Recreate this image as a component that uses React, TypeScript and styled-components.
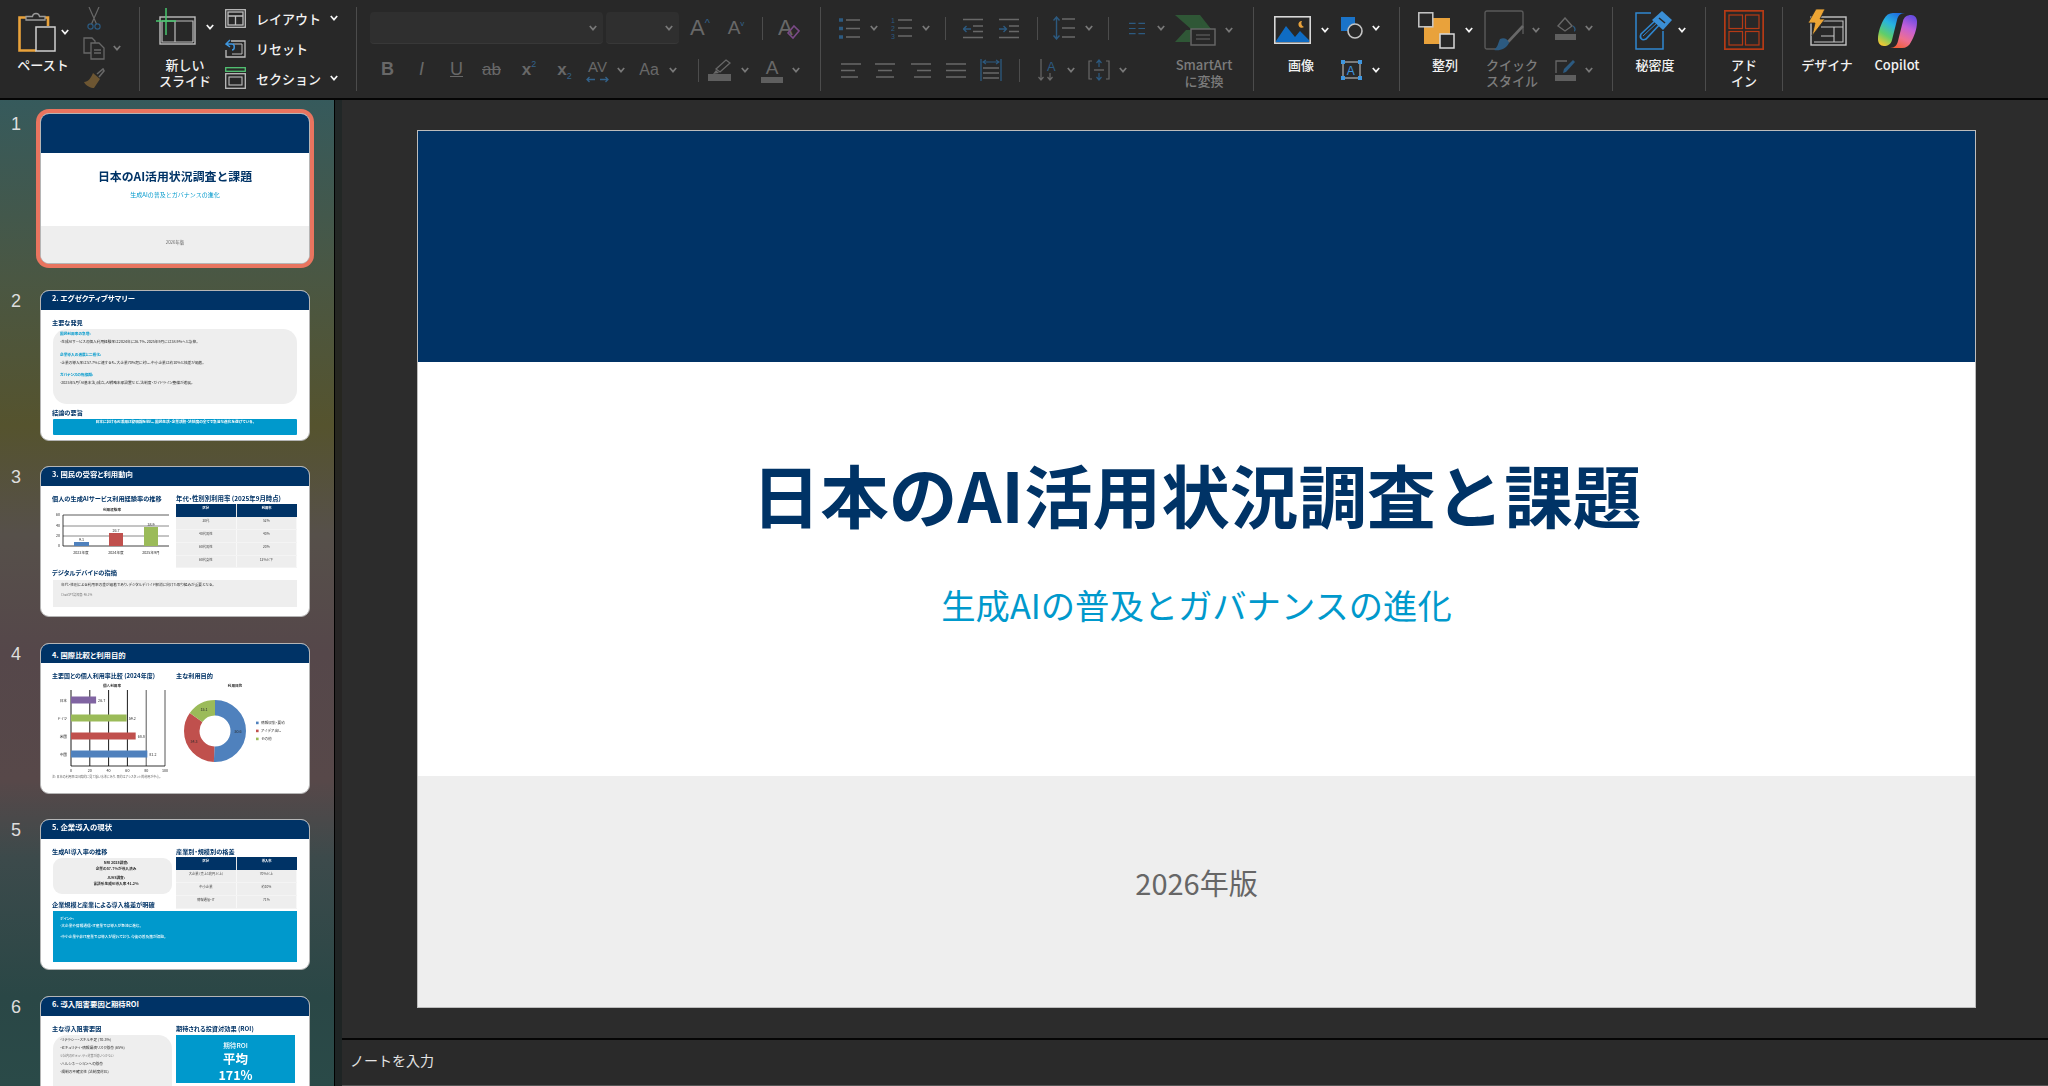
import React from 'react';
import styled, { createGlobalStyle } from 'styled-components';

const JP = `"Noto Sans CJK JP", "Noto Sans", sans-serif`;
const DIM = '#686868';
const DIMBLUE = '#2c5a80';
const NAVY = '#003366';
const CYAN = '#0099cc';

const GlobalStyle = createGlobalStyle`
  html, body {
    margin: 0;
    padding: 0;
    background: #2b2b2b;
    overflow: hidden;
  }
  * {
    box-sizing: border-box;
  }
`;

const Window = styled.div`
  width: 2048px;
  height: 1086px;
  display: flex;
  flex-direction: column;
  overflow: hidden;
  font-family: ${JP};
  color: #fff;
`;

/* ---------- ribbon ---------- */

const Ribbon = styled.header`
  height: 100px;
  flex: none;
  display: flex;
  align-items: stretch;
  background: #282828;
  border-bottom: 2px solid #050505;
`;

const Group = styled.section<{ $w?: number }>`
  display: flex;
  align-items: flex-start;
  flex: none;
  width: ${(p) => (p.$w ? `${p.$w}px` : 'auto')};
`;

const GroupRule = styled.i`
  flex: none;
  width: 1px;
  height: 84px;
  align-self: center;
  background: #4c4c4c;
`;

const BigTool = styled.div<{ $w: number; $ml?: number }>`
  flex: none;
  width: ${(p) => p.$w}px;
  margin-left: ${(p) => p.$ml ?? 0}px;
  display: flex;
  flex-direction: column;
  align-items: center;
`;

const BigIconRow = styled.div<{ $dy?: number }>`
  height: 44px;
  margin-top: ${(p) => 8 + (p.$dy ?? 0)}px;
  margin-bottom: ${(p) => -(p.$dy ?? 0)}px;
  display: flex;
  align-items: center;
`;

const BigLabel = styled.div<{ $off?: boolean; $dx?: number }>`
  margin-top: 5px;
  margin-right: ${(p) => p.$dx ?? 0}px;
  font-size: 13px;
  line-height: 16px;
  font-weight: 500;
  text-align: center;
  white-space: nowrap;
  color: ${(p) => (p.$off ? '#7c7c7c' : '#f2f2f2')};
`;

const ToolStack = styled.div<{ $w?: number; $ml?: number }>`
  flex: none;
  width: ${(p) => (p.$w ? `${p.$w}px` : 'auto')};
  margin-left: ${(p) => p.$ml ?? 0}px;
  margin-top: 11px;
  display: grid;
  grid-auto-rows: 34px;
  row-gap: 8px;
`;

const MiniStack = styled.div<{ $w: number; $ml: number }>`
  flex: none;
  width: ${(p) => p.$w}px;
  margin-left: ${(p) => p.$ml}px;
  margin-top: 3px;
  display: grid;
  grid-auto-rows: 30px;
`;

const ToolRow = styled.div`
  display: flex;
  align-items: center;
`;

const MiniLabel = styled.span`
  margin-left: 10px;
  font-size: 13px;
  font-weight: 500;
  color: #f2f2f2;
  white-space: nowrap;
`;

const Slot = styled.span<{ $w: number; $ml?: number }>`
  flex: none;
  width: ${(p) => p.$w}px;
  margin-left: ${(p) => p.$ml ?? 0}px;
  display: inline-flex;
  align-items: center;
  justify-content: center;
`;

const Combo = styled.div<{ $w: number; $ml: number }>`
  flex: none;
  width: ${(p) => p.$w}px;
  height: 32px;
  margin-left: ${(p) => p.$ml}px;
  padding-right: 6px;
  display: flex;
  align-items: center;
  justify-content: flex-end;
  background: #2f2f2f;
  border-bottom: 1px solid #383838;
  border-radius: 4px;
`;

const InnerRule = styled.i<{ $ml: number }>`
  flex: none;
  width: 1px;
  height: 23px;
  margin-left: ${(p) => p.$ml}px;
  background: #4c4c4c;
`;

const Glyph = styled.span<{ $size?: number; $bold?: boolean; $italic?: boolean; $under?: boolean; $strike?: boolean }>`
  font-family: "Liberation Sans", sans-serif;
  font-size: ${(p) => p.$size ?? 17}px;
  line-height: 1.2;
  color: ${DIM};
  font-weight: ${(p) => (p.$bold ? 700 : 400)};
  font-style: ${(p) => (p.$italic ? 'italic' : 'normal')};
  text-decoration: ${(p) => (p.$under ? 'underline' : p.$strike ? 'line-through' : 'none')};
  white-space: nowrap;
`;

const Script = styled.sub<{ $up?: boolean; $size?: number }>`
  font-size: ${(p) => p.$size ?? 9}px;
  font-weight: 400;
  color: #33628a;
  vertical-align: ${(p) => (p.$up ? '8px' : '-4px')};
  line-height: 0;
`;

const SwatchTool = styled.span`
  display: inline-flex;
  flex-direction: column;
  align-items: center;
  width: 22px;
`;

const SwatchBar = styled.i`
  display: block;
  width: 22px;
  height: 6px;
  margin-top: -2px;
  background: #5f5f5f;
`;

const ChevronSvg = styled.svg<{ $ml: number }>`
  flex: none;
  margin-left: ${(p) => p.$ml}px;
`;

const Chev = ({ ml = 10, off = false }: { ml?: number; off?: boolean }) => (
  <ChevronSvg $ml={ml} width="8" height="6" viewBox="0 0 8 6">
    <path d="M0.8 1 L4 4.6 L7.2 1" fill="none" stroke={off ? '#787878' : '#f4f4f4'} strokeWidth="1.7" />
  </ChevronSvg>
);

const PasteIcon = () => (
  <svg width="38" height="40" viewBox="0 0 38 40" fill="none">
    <path d="M8 5.5H1.5V38.5H18" stroke="#e9a23b" strokeWidth="2.6" />
    <path d="M27 5.5H30V14" stroke="#e9a23b" strokeWidth="2.6" />
    <path d="M8 8V4.5H14.5C15 0.5 21 0.5 21.5 4.5H27V8Z" stroke="#9a9a9a" strokeWidth="1.3" />
    <rect x="18" y="15" width="19" height="24" fill="#282828" stroke="#cfcfcf" strokeWidth="1.5" />
  </svg>
);

const ScissorsIcon = () => (
  <svg width="14" height="23" viewBox="0 0 14 23" fill="none" stroke={DIM} strokeWidth="1.2">
    <path d="M2 0L9.5 17M12 0L4.5 17" />
    <circle cx="3.5" cy="19.5" r="2.6" stroke={DIMBLUE} />
    <circle cx="10.5" cy="19.5" r="2.6" stroke={DIMBLUE} />
  </svg>
);

const CopyIcon = () => (
  <svg width="22" height="23" viewBox="0 0 22 23" fill="none" stroke={DIM} strokeWidth="1.3">
    <path d="M8 16H1V1H9L12 4V6" />
    <path d="M8 6H16L21 11V22H8Z" />
    <path d="M11 13H18M11 16H18" />
  </svg>
);

const BrushIcon = () => (
  <svg width="22" height="21" viewBox="0 0 22 21" fill="none">
    <path d="M14 6L20 1L21 3L16 9" stroke={DIM} strokeWidth="1.6" />
    <path d="M10 5L17 11L11 20C8 20 3 18 1 14C5 14 8 10 10 5Z" fill="#6d5632" />
  </svg>
);

const NewSlideIcon = () => (
  <svg width="40" height="38" viewBox="0 0 40 38" fill="none">
    <rect x="4" y="9" width="35" height="27" stroke="#bdbdbd" strokeWidth="1.4" />
    <path d="M6 13H37V34M6 13V34H37M19 13V34" stroke="#bdbdbd" strokeWidth="1.2" />
    <path d="M10 0V27M0 13H20" stroke="#47c66d" strokeWidth="1.5" />
  </svg>
);

const LayoutIcon = () => (
  <svg width="21" height="19" viewBox="0 0 21 19" fill="none" stroke="#bdbdbd" strokeWidth="1.3">
    <rect x="0.7" y="0.7" width="19.6" height="17.6" />
    <rect x="3" y="3" width="15" height="13" />
    <path d="M3 7H18M10.5 7V16" />
  </svg>
);

const ResetIcon = () => (
  <svg width="21" height="19" viewBox="0 0 21 19" fill="none">
    <path d="M6 2H20V18H1V11" stroke="#bdbdbd" strokeWidth="1.3" />
    <path d="M8 5H17V15H7" stroke="#bdbdbd" strokeWidth="1" />
    <path d="M5 1L1 5L5 8M1 5H7C10 5 10 11 7 11" stroke="#3f97e0" strokeWidth="1.5" />
  </svg>
);

const SectionIcon = () => (
  <svg width="21" height="22" viewBox="0 0 21 22" fill="none">
    <rect x="0.7" y="0.7" width="19.6" height="3.6" stroke="#53c574" strokeWidth="1.3" />
    <rect x="0.7" y="6.7" width="19.6" height="14.6" stroke="#bdbdbd" strokeWidth="1.3" />
    <rect x="4" y="10" width="13" height="8" stroke="#bdbdbd" strokeWidth="1.1" />
  </svg>
);

const ClearFormatIcon = () => (
  <svg width="22" height="24" viewBox="0 0 22 24">
    <text x="0" y="19" fontFamily="Liberation Sans" fontSize="22" fill={DIM}>A</text>
    <path d="M16 10L21 15L15 22L10 17Z" fill="none" stroke="#7a4a86" strokeWidth="1.6" />
  </svg>
);

const HighlightIcon = () => (
  <svg width="23" height="22" viewBox="0 0 23 22" fill="none">
    <path d="M18 1L22 4L12 13L8 10Z" stroke={DIM} strokeWidth="1.3" />
    <path d="M8 11L11 14L5 15Z" fill={DIM} />
    <rect y="15" width="23" height="7" fill="#5f5f5f" />
  </svg>
);

const KernArrows = () => (
  <svg width="23" height="7" viewBox="0 0 23 7" fill="none" stroke="#33628a" strokeWidth="1.3">
    <path d="M1 3.5H9M3.5 1L1 3.5L3.5 6M14 3.5H22M19.5 1L22 3.5L19.5 6" />
  </svg>
);

const KernTool = styled.span`
  display: inline-flex;
  flex-direction: column;
  align-items: center;
  line-height: 1;
`;

const BulletsIcon = () => (
  <svg width="21" height="21" viewBox="0 0 21 21" fill="none" stroke={DIM} strokeWidth="1.4">
    <path d="M7 2H21M7 10.5H21M7 19H21" />
    <path d="M0 2H4M0 10.5H4M0 19H4" stroke={DIMBLUE} strokeWidth="3.4" />
  </svg>
);

const NumberedIcon = () => (
  <svg width="21" height="23" viewBox="0 0 21 23" fill="none">
    <path d="M7 3H21M7 11H21M7 19H21" stroke={DIM} strokeWidth="1.4" />
    <text x="0" y="6" fontFamily="Liberation Sans" fontSize="7" fill={DIMBLUE}>1</text>
    <text x="0" y="14" fontFamily="Liberation Sans" fontSize="7" fill={DIMBLUE}>2</text>
    <text x="0" y="22" fontFamily="Liberation Sans" fontSize="7" fill={DIMBLUE}>3</text>
  </svg>
);

const IndentIcon = ({ flip = false }: { flip?: boolean }) => (
  <svg width="20" height="21" viewBox="0 0 20 21" fill="none" stroke={DIM} strokeWidth="1.4">
    <path d="M0 1.5H20M10 8H20M10 13.5H20M0 19.5H20" />
    {flip ? (
      <path d="M0 11H7M4.5 8L7.5 11L4.5 14" stroke={DIMBLUE} />
    ) : (
      <path d="M1 11H8M3.5 8L0.5 11L3.5 14" stroke={DIMBLUE} />
    )}
  </svg>
);

const LineSpacingIcon = () => (
  <svg width="22" height="24" viewBox="0 0 22 24" fill="none">
    <path d="M9 3H22M9 12H22M9 21H22" stroke={DIM} strokeWidth="1.4" />
    <path d="M3.5 1V23M0.5 4.5L3.5 1L6.5 4.5M0.5 19.5L3.5 23L6.5 19.5" stroke={DIMBLUE} strokeWidth="1.4" />
  </svg>
);

const ColumnsIcon = () => (
  <svg width="17" height="13" viewBox="0 0 17 13" fill="none" stroke={DIMBLUE} strokeWidth="1.3">
    <path d="M0 1H7M10 1H17M0 6.5H7M10 6.5H17M0 12H7M10 12H17" />
  </svg>
);

const SmartArtIcon = () => (
  <svg width="41" height="31" viewBox="0 0 41 31">
    <path d="M0 0H25L36 14H16ZM0 27L11 15H16L15 27Z" fill="#2f5736" />
    <path d="M36 14L28 14L24 1Z" fill="#2f5736" />
    <rect x="16" y="14" width="24" height="16" fill="#282828" stroke={DIM} strokeWidth="1.4" />
    <path d="M21 20H35M21 24H35" stroke={DIM} strokeWidth="1.1" />
  </svg>
);

const AlignIcon = ({ kind }: { kind: 'left' | 'center' | 'right' | 'full' }) => {
  const lines = {
    left: 'M0 1H20M0 7.5H14M0 14H17',
    center: 'M0 1H20M3 7.5H17M1 14H19',
    right: 'M0 1H20M6 7.5H20M3 14H20',
    full: 'M0 1H20M0 7.5H20M0 14H20',
  }[kind];
  return (
    <svg width="20" height="15" viewBox="0 0 20 15" fill="none" stroke={DIM} strokeWidth="1.5">
      <path d={lines} />
    </svg>
  );
};

const DistributedIcon = () => (
  <svg width="22" height="22" viewBox="0 0 22 22" fill="none">
    <path d="M1 0V22M21 0V22" stroke={DIMBLUE} strokeWidth="1.3" />
    <path d="M4 3H18M6 1L3 3L6 5M16 1L19 3L16 5" stroke={DIMBLUE} strokeWidth="1.1" />
    <path d="M3 9H19M3 14H19M3 19H19" stroke={DIM} strokeWidth="1.4" />
  </svg>
);

const TextDirectionIcon = () => (
  <svg width="19" height="22" viewBox="0 0 19 22" fill="none">
    <text x="9" y="12" fontFamily="Liberation Sans" fontSize="13" fill={DIMBLUE}>A</text>
    <path d="M3 0V21M0.5 18L3 21L5.5 18M12 14V21M9.5 18L12 21L14.5 18" stroke={DIM} strokeWidth="1.2" />
  </svg>
);

const TextAlignIcon = () => (
  <svg width="22" height="22" viewBox="0 0 22 22" fill="none">
    <path d="M4 2H1V20H4M18 2H21V20H18" stroke={DIM} strokeWidth="1.2" />
    <path d="M6 11H16" stroke={DIM} strokeWidth="1.3" />
    <path d="M11 1V8M8.5 4L11 1L13.5 4M11 14V21M8.5 18L11 21L13.5 18" stroke={DIMBLUE} strokeWidth="1.2" />
  </svg>
);

const PictureIcon = () => (
  <svg width="37" height="28" viewBox="0 0 37 28">
    <rect x="0.8" y="0.8" width="35.4" height="26.4" fill="#282828" stroke="#d8d8d8" strokeWidth="1.6" />
    <path d="M2 25L12 10L21 21L26 15L35 24V26H2Z" fill="#0f6cc4" />
    <path d="M28 5A3.4 3.4 0 1 0 30 11A4 4 0 0 1 28 5Z" fill="#e9a23b" />
  </svg>
);

const ShapesIcon = () => (
  <svg width="22" height="22" viewBox="0 0 22 22">
    <rect x="0" y="0" width="14" height="14" fill="#1a73c8" />
    <circle cx="14" cy="14" r="7" fill="#282828" stroke="#c4c4c4" strokeWidth="1.6" />
  </svg>
);

const TextBoxIcon = () => (
  <svg width="21" height="20" viewBox="0 0 21 20">
    <rect x="2" y="2" width="17" height="16" fill="none" stroke="#a9a9a9" strokeWidth="1.3" />
    <text x="5.8" y="14.5" fontFamily="Liberation Sans" fontSize="12" fill="#3f97e0">A</text>
    <path d="M0 0h4v4H0zM17 0h4v4h-4zM0 16h4v4H0zM17 16h4v4h-4z" fill="#3f97e0" />
  </svg>
);

const ArrangeIcon = () => (
  <svg width="37" height="37" viewBox="0 0 37 37">
    <rect x="6" y="6" width="26" height="26" fill="#e9a23b" />
    <rect x="0.8" y="0.8" width="14" height="14" fill="#282828" stroke="#c9c9c9" strokeWidth="1.5" />
    <rect x="22" y="22" width="14" height="14" fill="#282828" stroke="#d9d9d9" strokeWidth="1.5" />
  </svg>
);

const QuickStyleIcon = () => (
  <svg width="40" height="41" viewBox="0 0 40 41" fill="none">
    <path d="M14 39H3C1.5 39 1 38 1 37V3C1 2 1.5 1 3 1H37C38 1 39 2 39 3V24" stroke="#5a5a5a" strokeWidth="1.4" />
    <path d="M39 16L24 32" stroke={DIM} strokeWidth="2.6" />
    <path d="M16 29C20 27 24 29 25 33C22 39 16 41 10 40C14 37 14 33 16 29Z" fill={DIMBLUE} />
  </svg>
);

const FillIcon = () => (
  <svg width="21" height="23" viewBox="0 0 21 23" fill="none">
    <path d="M10 1L17 9L10 14L3 9Z" stroke={DIM} strokeWidth="1.4" />
    <path d="M18 9C21 11 20 14 19 14" stroke={DIMBLUE} strokeWidth="1.4" />
    <rect y="17" width="21" height="6" fill="#5f5f5f" />
  </svg>
);

const OutlineIcon = () => (
  <svg width="21" height="22" viewBox="0 0 21 22" fill="none">
    <path d="M12 2H1V14" stroke={DIM} strokeWidth="1.3" />
    <path d="M18 1L20 3L11 13L8 14L9 10Z" fill={DIMBLUE} />
    <rect y="16" width="21" height="6" fill="#5f5f5f" />
  </svg>
);

const SensitivityIcon = () => (
  <svg width="38" height="39" viewBox="0 0 38 39" fill="none">
    <path d="M16 2H1V38H28V20" stroke="#2f86cf" strokeWidth="1.5" />
    <path d="M6 23L22 8L26 12L11 28C7 30 4 27 6 23Z" stroke="#2f86cf" strokeWidth="1.6" />
    <path d="M8 25L24 10" stroke="#2f86cf" strokeWidth="1" />
    <path d="M17 9L27 0L37 9L28 19Z" fill="#3a8fd6" />
    <path d="M24 7L30 12" stroke="#282828" strokeWidth="1.5" />
  </svg>
);

const AddInIcon = () => (
  <svg width="40" height="40" viewBox="0 0 40 40" fill="none" stroke="#b53a15" strokeWidth="1.2">
    <rect x="0.8" y="0.8" width="38.4" height="38.4" strokeWidth="1.8" />
    <rect x="5" y="5" width="13.5" height="13.5" />
    <rect x="21.5" y="5" width="13.5" height="13.5" />
    <rect x="5" y="21.5" width="13.5" height="13.5" />
    <rect x="21.5" y="21.5" width="13.5" height="13.5" />
  </svg>
);

const DesignerIcon = () => (
  <svg width="39" height="37" viewBox="0 0 39 37" fill="none">
    <rect x="3" y="8" width="35" height="28" stroke="#c4c4c4" strokeWidth="1.4" />
    <path d="M6 12H35V33H6M13 18H35M26 18V33M13 27H26" stroke="#c4c4c4" strokeWidth="1.1" />
    <path d="M8 0H17L12 10H17L4 27L7 14H0Z" fill="#eda534" stroke="#282828" strokeWidth="0.8" />
  </svg>
);

const CopilotIcon = () => (
  <svg width="41" height="37" viewBox="0 0 41 37">
    <defs>
      <linearGradient id="copilotLeft" x1="0.7" y1="0" x2="0.2" y2="1">
        <stop offset="0" stopColor="#1f6fe0" />
        <stop offset="0.35" stopColor="#27b4e0" />
        <stop offset="0.7" stopColor="#5fce6a" />
        <stop offset="1" stopColor="#f4c631" />
      </linearGradient>
      <linearGradient id="copilotRight" x1="0.7" y1="0" x2="0.3" y2="1">
        <stop offset="0" stopColor="#6a4de0" />
        <stop offset="0.35" stopColor="#c25fd8" />
        <stop offset="0.7" stopColor="#ef6f8f" />
        <stop offset="1" stopColor="#f2603a" />
      </linearGradient>
    </defs>
    <path d="M16 1H28C23 1 21 4 20 8L15 28C14 32 11 34 7 34C3 34 1 31 1 27C1 20 4 12 7 7C9 3 12 1 16 1Z" fill="url(#copilotLeft)" />
    <path d="M25 36H13C18 36 20 33 21 29L26 9C27 5 30 3 34 3C38 3 40 6 40 10C40 17 37 25 34 30C32 34 29 36 25 36Z" fill="url(#copilotRight)" />
  </svg>
);

const ToolRibbon = () => (
  <Ribbon>
    <Group $w={139}>
      <BigTool $w={60} $ml={13}>
        <BigIconRow $dy={2}>
          <PasteIcon />
          <Chev ml={5} />
        </BigIconRow>
        <BigLabel>ペースト</BigLabel>
      </BigTool>
      <MiniStack $w={50} $ml={10}>
        <ToolRow>
          <Slot $w={22}><ScissorsIcon /></Slot>
        </ToolRow>
        <ToolRow>
          <CopyIcon />
          <Chev ml={8} off />
        </ToolRow>
        <ToolRow>
          <BrushIcon />
        </ToolRow>
      </MiniStack>
    </Group>
    <GroupRule />
    <Group $w={216}>
      <BigTool $w={70} $ml={10}>
        <BigIconRow $dy={-3}>
          <NewSlideIcon />
          <Chev ml={10} />
        </BigIconRow>
        <BigLabel>
          新しい
          <br />
          スライド
        </BigLabel>
      </BigTool>
      <MiniStack $w={112} $ml={5}>
        <ToolRow>
          <LayoutIcon />
          <MiniLabel>レイアウト</MiniLabel>
          <Chev ml={9} />
        </ToolRow>
        <ToolRow>
          <ResetIcon />
          <MiniLabel>リセット</MiniLabel>
        </ToolRow>
        <ToolRow>
          <SectionIcon />
          <MiniLabel>セクション</MiniLabel>
          <Chev ml={9} />
        </ToolRow>
      </MiniStack>
    </Group>
    <GroupRule />
    <Group $w={463}>
      <ToolStack>
        <ToolRow>
          <Combo $w={233} $ml={13}><Chev ml={0} off /></Combo>
          <Combo $w={73} $ml={3}><Chev ml={0} off /></Combo>
          <Slot $w={20} $ml={11}><Glyph $size={22}>A<Script $up $size={11}>^</Script></Glyph></Slot>
          <Slot $w={18} $ml={17}><Glyph $size={19}>A<Script $up $size={8}>v</Script></Glyph></Slot>
          <InnerRule $ml={17} />
          <Slot $w={22} $ml={15}><ClearFormatIcon /></Slot>
        </ToolRow>
        <ToolRow>
          <Slot $w={11} $ml={25}><Glyph $bold $size={18}>B</Glyph></Slot>
          <Slot $w={7} $ml={25}><Glyph $italic $size={18}>I</Glyph></Slot>
          <Slot $w={11} $ml={26}><Glyph $under $size={18}>U</Glyph></Slot>
          <Slot $w={21} $ml={19}><Glyph $strike>ab</Glyph></Slot>
          <Slot $w={14} $ml={20}><Glyph $bold>x<Script $up>2</Script></Glyph></Slot>
          <Slot $w={15} $ml={21}><Glyph $bold>x<Script>2</Script></Glyph></Slot>
          <Slot $w={23} $ml={14}>
            <KernTool>
              <Glyph $size={15}>AV</Glyph>
              <KernArrows />
            </KernTool>
          </Slot>
          <Chev ml={8} off />
          <Slot $w={20} $ml={14}><Glyph $size={16}>Aa</Glyph></Slot>
          <Chev ml={10} off />
          <InnerRule $ml={21} />
          <Slot $w={23} $ml={9}><HighlightIcon /></Slot>
          <Chev ml={10} off />
          <Slot $w={22} $ml={12}>
            <SwatchTool>
              <Glyph $size={19}>A</Glyph>
              <SwatchBar />
            </SwatchTool>
          </Slot>
          <Chev ml={9} off />
        </ToolRow>
      </ToolStack>
    </Group>
    <GroupRule />
    <Group $w={432}>
      <ToolStack $w={344}>
        <ToolRow>
          <Slot $w={21} $ml={18}><BulletsIcon /></Slot>
          <Chev ml={10} off />
          <Slot $w={21} $ml={13}><NumberedIcon /></Slot>
          <Chev ml={10} off />
          <InnerRule $ml={15} />
          <Slot $w={20} $ml={17}><IndentIcon /></Slot>
          <Slot $w={20} $ml={16}><IndentIcon flip /></Slot>
          <InnerRule $ml={18} />
          <Slot $w={22} $ml={15}><LineSpacingIcon /></Slot>
          <Chev ml={10} off />
          <InnerRule $ml={15} />
          <Slot $w={16} $ml={20}><ColumnsIcon /></Slot>
          <Chev ml={12} off />
        </ToolRow>
        <ToolRow>
          <Slot $w={20} $ml={20}><AlignIcon kind="left" /></Slot>
          <Slot $w={20} $ml={14}><AlignIcon kind="center" /></Slot>
          <Slot $w={20} $ml={16}><AlignIcon kind="right" /></Slot>
          <Slot $w={20} $ml={15}><AlignIcon kind="full" /></Slot>
          <Slot $w={22} $ml={14}><DistributedIcon /></Slot>
          <InnerRule $ml={17} />
          <Slot $w={19} $ml={18}><TextDirectionIcon /></Slot>
          <Chev ml={10} off />
          <Slot $w={22} $ml={13}><TextAlignIcon /></Slot>
          <Chev ml={9} off />
        </ToolRow>
      </ToolStack>
      <BigTool $w={78}>
        <BigIconRow>
          <SmartArtIcon />
          <Chev ml={9} off />
        </BigIconRow>
        <BigLabel $off>
          SmartArt
          <br />
          に変換
        </BigLabel>
      </BigTool>
    </Group>
    <GroupRule />
    <Group $w={145}>
      <BigTool $w={70} $ml={12}>
        <BigIconRow>
          <PictureIcon />
          <Chev ml={10} />
        </BigIconRow>
        <BigLabel>画像</BigLabel>
      </BigTool>
      <ToolStack $ml={5}>
        <ToolRow>
          <ShapesIcon />
          <Chev ml={9} />
        </ToolRow>
        <ToolRow>
          <TextBoxIcon />
          <Chev ml={10} />
        </ToolRow>
      </ToolStack>
    </Group>
    <GroupRule />
    <Group $w={212}>
      <BigTool $w={66} $ml={12}>
        <BigIconRow>
          <ArrangeIcon />
          <Chev ml={10} />
        </BigIconRow>
        <BigLabel>整列</BigLabel>
      </BigTool>
      <BigTool $w={60} $ml={4}>
        <BigIconRow>
          <QuickStyleIcon />
          <Chev ml={8} off />
        </BigIconRow>
        <BigLabel $off>
          クイック
          <br />
          スタイル
        </BigLabel>
      </BigTool>
      <ToolStack $ml={13}>
        <ToolRow>
          <FillIcon />
          <Chev ml={9} off />
        </ToolRow>
        <ToolRow>
          <OutlineIcon />
          <Chev ml={9} off />
        </ToolRow>
      </ToolStack>
    </Group>
    <GroupRule />
    <Group $w={92}>
      <BigTool $w={70} $ml={12}>
        <BigIconRow>
          <SensitivityIcon />
          <Chev ml={5} />
        </BigIconRow>
        <BigLabel $dx={10}>秘密度</BigLabel>
      </BigTool>
    </Group>
    <GroupRule />
    <Group $w={76}>
      <BigTool $w={76}>
        <BigIconRow>
          <AddInIcon />
        </BigIconRow>
        <BigLabel>
          アド
          <br />
          イン
        </BigLabel>
      </BigTool>
    </Group>
    <GroupRule />
    <Group>
      <BigTool $w={60} $ml={14}>
        <BigIconRow $dy={-3}>
          <DesignerIcon />
        </BigIconRow>
        <BigLabel>デザイナ</BigLabel>
      </BigTool>
      <BigTool $w={60} $ml={10}>
        <BigIconRow>
          <CopilotIcon />
        </BigIconRow>
        <BigLabel>Copilot</BigLabel>
      </BigTool>
    </Group>
  </Ribbon>
);

/* ---------- thumbnails ---------- */

const Workspace = styled.div`
  flex: 1;
  min-height: 0;
  display: flex;
`;

const Sidebar = styled.aside`
  flex: none;
  width: 342px;
  height: 986px;
  padding-top: 13px;
  overflow: hidden;
  background: linear-gradient(
    180deg,
    #365a5c 0%,
    #4a5743 18%,
    #55532e 33%,
    #56504a 44%,
    #55474a 56%,
    #574849 69%,
    #3c4a4b 77%,
    #2a4746 91%,
    #2a4a48 100%
  );
  border-right: 7px solid rgba(28, 28, 28, 0.82);
  box-shadow: inset -1px 0 0 #000;
`;

const ThumbRow = styled.div`
  display: flex;
  align-items: flex-start;
  height: 151px;
  margin-bottom: 25.5px;
`;

const ThumbNumber = styled.div`
  width: 40px;
  padding-left: 11px;
  font-family: "Liberation Sans", sans-serif;
  font-size: 18px;
  line-height: 22px;
  color: #dedede;
`;

const Thumb = styled.div<{ $active?: boolean }>`
  flex: none;
  width: 270px;
  height: 151px;
  overflow: hidden;
  background: #fff;
  border: 1px solid #b5b5b5;
  border-radius: 9px;
  box-shadow: ${(p) => (p.$active ? '0 0 0 4px #e9745f' : 'none')};
`;

const ThumbInner = styled.div`
  height: 100%;
  filter: blur(0.25px);
  color: #333;
  font-feature-settings: "palt";
`;

const CoverBand = styled.div`
  height: 39px;
  background: ${NAVY};
`;

const CoverMiddle = styled.div`
  height: 73px;
  padding-top: 15px;
  text-align: center;
`;

const CoverTitle = styled.div`
  font-size: 11.9px;
  line-height: 16px;
  font-weight: 700;
  color: ${NAVY};
  font-feature-settings: normal;
`;

const CoverSub = styled.div`
  margin-top: 7px;
  font-size: 6px;
  line-height: 8px;
  color: ${CYAN};
  font-feature-settings: normal;
`;

const CoverFoot = styled.div`
  height: 39px;
  padding-top: 12px;
  background: #eeeeee;
  text-align: center;
  font-size: 4.4px;
  line-height: 8px;
  color: #666;
`;

const ThumbHeader = styled.div<{ $low?: boolean }>`
  height: 19px;
  padding-left: 11px;
  background: ${NAVY};
  color: #fff;
  font-size: 7.4px;
  line-height: ${(p) => (p.$low ? 21 : 14)}px;
  font-weight: 700;
  white-space: nowrap;
  overflow: hidden;
`;

const Body = styled.div`
  padding: 9px 12px 0 11px;
`;

const Heading = styled.div<{ $mt?: number; $size?: number }>`
  margin-top: ${(p) => p.$mt ?? 0}px;
  font-size: ${(p) => p.$size ?? 6.2}px;
  line-height: 8px;
  font-weight: 700;
  color: ${NAVY};
  white-space: nowrap;
`;

const RoundPanel = styled.div<{ $h: number; $r: number; $w?: number }>`
  width: ${(p) => (p.$w ? `${p.$w}px` : 'auto')};
  height: ${(p) => p.$h}px;
  margin: 2px 0 0 1px;
  padding: 2px 0 0 7px;
  background: #eeeeee;
  border-radius: ${(p) => p.$r}px;
`;

const MicroLine = styled.div<{ $mt?: number; $accent?: boolean; $tiny?: boolean; $bold?: boolean; $center?: boolean }>`
  margin-top: ${(p) => p.$mt ?? 0}px;
  font-size: ${(p) => (p.$tiny ? 3 : 3.7)}px;
  line-height: 6px;
  font-weight: ${(p) => (p.$accent || p.$bold ? 700 : 400)};
  text-align: ${(p) => (p.$center ? 'center' : 'left')};
  color: ${(p) => (p.$accent ? CYAN : p.$tiny ? '#777' : '#2c2c2c')};
  white-space: nowrap;
`;

const BlueBar = styled.div`
  height: 16px;
  margin: 2px 0 0 1px;
  background: ${CYAN};
  color: #fff;
  font-size: 3.7px;
  line-height: 6px;
  font-weight: 700;
  text-align: center;
  border-radius: 1px;
`;

const BluePanel = styled.div`
  height: 51px;
  margin: 2px 0 0 1px;
  padding: 5px 0 0 7px;
  background: ${CYAN};
  color: #fff;
  font-size: 3.7px;
  line-height: 6px;
  font-weight: 500;
`;

const WhiteLine = styled.div<{ $mt?: number }>`
  margin-top: ${(p) => p.$mt ?? 0}px;
  white-space: nowrap;
`;

const TwoCols = styled.div<{ $h: number }>`
  display: grid;
  grid-template-columns: 124px 121px;
  height: ${(p) => p.$h}px;
`;

const Col = styled.div`
  min-width: 0;
`;

const MiniChart = styled.svg`
  display: block;
  margin-top: 1px;
  overflow: visible;
  font-family: ${JP};
`;

const MiniTable = styled.table`
  width: 121px;
  margin-top: 1px;
  border-collapse: collapse;
  table-layout: fixed;
  font-size: 3.3px;
  text-align: center;
  color: #444;

  th {
    height: 13px;
    background: ${NAVY};
    color: #fff;
    font-weight: 700;
    vertical-align: top;
    padding-top: 1px;
    border-right: 1px solid #e6e6e6;
  }
  th:last-child {
    border-right: 0;
  }
  td {
    height: 12.7px;
    padding: 0;
    vertical-align: top;
    line-height: 7px;
    background: #eeeeee;
    border-right: 1px solid #f8f8f8;
    border-bottom: 1px solid #f4f4f4;
  }
`;

const FlatPanel = styled.div`
  height: 27px;
  margin: 3px 0 0 1px;
  padding: 2px 0 0 8px;
  background: #eeeeee;
`;

const RoiBox = styled.div`
  width: 119px;
  height: 48px;
  margin-top: 2px;
  padding-top: 5px;
  background: ${CYAN};
  color: #fff;
  text-align: center;
  font-weight: 700;
`;

const RoiLabel = styled.div`
  font-size: 6.6px;
  line-height: 10px;
  font-weight: 500;
`;

const RoiValue = styled.div`
  font-size: 12.5px;
  line-height: 15px;
  margin-top: 1px;
`;

const FootNote = styled.div`
  margin-top: 2px;
  font-size: 3px;
  line-height: 5px;
  color: #666;
  white-space: nowrap;
`;

const TXT = { fontSize: 3.7, fill: '#2c2c2c' };

const UsageChart = () => (
  <MiniChart width="119" height="54" viewBox="0 0 119 54">
    <text x="60" y="6.5" textAnchor="middle" fontSize="3.6" fontWeight="700" fill="#333">利用経験率</text>
    <path d="M11 11H117" stroke="#333" strokeWidth="0.8" />
    <path d="M11 22H117M11 32H117" stroke="#8a8a8a" strokeWidth="1" />
    <path d="M11 11V42H117" stroke="#111" strokeWidth="0.8" fill="none" />
    <rect x="22" y="38" width="15" height="4" fill="#4f81bd" />
    <rect x="57" y="29" width="14" height="13" fill="#c0504d" />
    <rect x="92" y="23" width="14" height="19" fill="#9bbb59" />
    {[
      ['60', 12],
      ['40', 23],
      ['20', 33],
      ['0', 43],
    ].map(([t, y]) => (
      <text key={t} x="8" y={y} textAnchor="end" {...TXT}>{t}</text>
    ))}
    <text x="29.5" y="36.5" textAnchor="middle" {...TXT}>9.1</text>
    <text x="64" y="27.5" textAnchor="middle" {...TXT}>26.7</text>
    <text x="99" y="21.5" textAnchor="middle" {...TXT}>38.9</text>
    <text x="29" y="50" textAnchor="middle" {...TXT}>2023年度</text>
    <text x="64" y="50" textAnchor="middle" {...TXT}>2024年度</text>
    <text x="99" y="50" textAnchor="middle" {...TXT}>2025年9月</text>
  </MiniChart>
);

const COUNTRIES: [string, number, string][] = [
  ['日本', 26.7, '#8064a2'],
  ['ドイツ', 59.2, '#9bbb59'],
  ['米国', 68.8, '#c0504d'],
  ['中国', 81.2, '#4f81bd'],
];

const CountryChart = () => (
  <MiniChart width="119" height="92" viewBox="0 0 119 92">
    <text x="60" y="5.5" textAnchor="middle" fontSize="3.6" fontWeight="700" fill="#333">個人利用率</text>
    {[0, 20, 40, 60, 80, 100].map((v) => (
      <g key={v}>
        <path d={`M${19 + v * 0.94} 9V85`} stroke={v === 80 || v === 100 ? '#444' : '#000'} strokeWidth="0.9" />
        <text x={19 + v * 0.94} y="91" textAnchor="middle" {...TXT}>{v}</text>
      </g>
    ))}
    <path d="M19 85H113" stroke="#000" strokeWidth="0.8" />
    {COUNTRIES.map(([name, value, color], i) => (
      <g key={name}>
        <rect x="19" y={15.5 + i * 18} width={value * 0.94} height="7" fill={color} />
        <text x="15" y={20.5 + i * 18} textAnchor="end" {...TXT}>{name}</text>
        <text x={21 + value * 0.94} y={20.5 + i * 18} {...TXT}>{value}</text>
      </g>
    ))}
  </MiniChart>
);

const PurposeChart = () => (
  <MiniChart width="120" height="92" viewBox="0 0 120 92">
    <text x="59" y="5.5" textAnchor="middle" fontSize="3.6" fontWeight="700" fill="#333">利用目的</text>
    <g transform="rotate(-90 39 50)" fill="none" strokeWidth="15.5">
      <circle cx="39" cy="50" r="23.25" stroke="#4f81bd" pathLength="100" strokeDasharray="50.6 100" />
      <circle cx="39" cy="50" r="23.25" stroke="#c0504d" pathLength="100" strokeDasharray="34.3 100" strokeDashoffset="-50.6" />
      <circle cx="39" cy="50" r="23.25" stroke="#9bbb59" pathLength="100" strokeDasharray="15.1 100" strokeDashoffset="-84.9" />
    </g>
    <text x="62" y="52" textAnchor="middle" {...TXT}>50.6</text>
    <text x="18" y="62" textAnchor="middle" {...TXT}>34.3</text>
    <text x="28" y="30" textAnchor="middle" {...TXT}>15.1</text>
    {[
      ['情報収集・要約', '#4f81bd', 43],
      ['アイデア出し', '#c0504d', 51],
      ['その他', '#9bbb59', 59],
    ].map(([label, color, y]) => (
      <g key={label as string}>
        <rect x="80" y={(y as number) - 2.4} width="2.6" height="2.6" fill={color as string} />
        <text x="85" y={(y as number) + 0.4} {...TXT}>{label}</text>
      </g>
    ))}
  </MiniChart>
);

const SlideOne = () => (
  <ThumbInner>
    <CoverBand />
    <CoverMiddle>
      <CoverTitle>日本のAI活用状況調査と課題</CoverTitle>
      <CoverSub>生成AIの普及とガバナンスの進化</CoverSub>
    </CoverMiddle>
    <CoverFoot>2026年版</CoverFoot>
  </ThumbInner>
);

const SlideTwo = () => (
  <ThumbInner>
    <ThumbHeader>2. エグゼクティブサマリー</ThumbHeader>
    <Body>
      <Heading>主要な発見</Heading>
      <RoundPanel $h={75} $r={14}>
        <MicroLine $accent>国民利用率の急増:</MicroLine>
        <MicroLine $mt={2}>-生成AIサービスの個人利用経験率は2024年に26.7%、2025年9月には38.9%へと急伸。</MicroLine>
        <MicroLine $mt={7} $accent>企業導入の進展と二極化:</MicroLine>
        <MicroLine $mt={2}>-企業の導入率は57.7%に達するも、大企業70%超に対し、中小企業は約10%と格差が顕著。</MicroLine>
        <MicroLine $mt={6} $accent>ガバナンスの転換期:</MicroLine>
        <MicroLine $mt={2}>-2025年5月「AI基本法」成立。AI戦略本部設置など、法制度・ガイドライン整備が進展。</MicroLine>
      </RoundPanel>
      <Heading $mt={5}>結論の要旨</Heading>
      <BlueBar>日本におけるAI活用は黎明期を脱し、国民生活・企業活動・法制度の全てで急速な進化を遂げている。</BlueBar>
    </Body>
  </ThumbInner>
);

const SlideThree = () => (
  <ThumbInner>
    <ThumbHeader>3. 国民の受容と利用動向</ThumbHeader>
    <Body>
      <TwoCols $h={74}>
        <Col>
          <Heading>個人の生成AIサービス利用経験率の推移</Heading>
          <UsageChart />
        </Col>
        <Col>
          <Heading $size={6.4}>年代・性別別利用率 (2025年9月時点)</Heading>
          <MiniTable>
            <thead>
              <tr><th>区分</th><th>利用率</th></tr>
            </thead>
            <tbody>
              <tr><td>20代</td><td>52%</td></tr>
              <tr><td>40代男性</td><td>40%</td></tr>
              <tr><td>60代男性</td><td>20%</td></tr>
              <tr><td>60代女性</td><td>12%以下</td></tr>
            </tbody>
          </MiniTable>
        </Col>
      </TwoCols>
      <Heading>デジタルデバイドの指摘</Heading>
      <FlatPanel>
        <MicroLine>年代・性別による利用率の差が顕著であり、デジタルデバイド解消に向けた取り組みが重要となる。</MicroLine>
        <MicroLine $mt={4} $tiny>ChatGPT認知度: 46.1%</MicroLine>
      </FlatPanel>
    </Body>
  </ThumbInner>
);

const SlideFour = () => (
  <ThumbInner>
    <ThumbHeader $low>4. 国際比較と利用目的</ThumbHeader>
    <Body>
      <TwoCols $h={101}>
        <Col>
          <Heading $size={6}>主要国との個人利用率比較 (2024年度)</Heading>
          <CountryChart />
        </Col>
        <Col>
          <Heading>主な利用目的</Heading>
          <PurposeChart />
        </Col>
      </TwoCols>
      <FootNote>注: 日本の利用率は国際的に見て低い水準にあり、目的はアシスタント的利用が中心。</FootNote>
    </Body>
  </ThumbInner>
);

const SlideFive = () => (
  <ThumbInner>
    <ThumbHeader>5. 企業導入の現状</ThumbHeader>
    <Body>
      <TwoCols $h={53}>
        <Col>
          <Heading>生成AI導入率の推移</Heading>
          <RoundPanel $h={36} $r={9} $w={119}>
            <MicroLine $bold $center>NRI 2025調査:</MicroLine>
            <MicroLine $bold $center>企業の57.7%が導入済み</MicroLine>
            <MicroLine $mt={3} $bold $center>JUAS調査:</MicroLine>
            <MicroLine $bold $center>言語系生成AI導入率 41.2%</MicroLine>
          </RoundPanel>
        </Col>
        <Col>
          <Heading>産業別・規模別の格差</Heading>
          <MiniTable>
            <thead>
              <tr><th>区分</th><th>導入率</th></tr>
            </thead>
            <tbody>
              <tr><td>大企業 (売上1兆円以上)</td><td>70%以上</td></tr>
              <tr><td>中小企業</td><td>約10%</td></tr>
              <tr><td>情報通信・IT</td><td>71%</td></tr>
            </tbody>
          </MiniTable>
        </Col>
      </TwoCols>
      <Heading>企業規模と産業による導入格差が明確</Heading>
      <BluePanel>
        <WhiteLine>ポイント:</WhiteLine>
        <WhiteLine $mt={1}>-大企業や情報通信・IT産業では導入が急速に進む。</WhiteLine>
        <WhiteLine $mt={5}>-中小企業や非IT産業では導入が遅れており、今後の普及策が課題。</WhiteLine>
      </BluePanel>
    </Body>
  </ThumbInner>
);

const SlideSix = () => (
  <ThumbInner>
    <ThumbHeader>6. 導入阻害要因と期待ROI</ThumbHeader>
    <Body>
      <TwoCols $h={100}>
        <Col>
          <Heading>主な導入阻害要因</Heading>
          <RoundPanel $h={70} $r={14} $w={119}>
            <MicroLine>-リテラシー・スキル不足 (70.3%)</MicroLine>
            <MicroLine $mt={2}>-セキュリティ・情報漏洩リスク懸念 (65%)</MicroLine>
            <MicroLine $mt={2} $tiny>※社内のセキュリティ対策が追いつかない</MicroLine>
            <MicroLine $mt={2}>-ハルシネーションへの懸念</MicroLine>
            <MicroLine $mt={2}>-規制の不確実性 (法制度対応)</MicroLine>
          </RoundPanel>
        </Col>
        <Col>
          <Heading>期待される投資対効果 (ROI)</Heading>
          <RoiBox>
            <RoiLabel>期待ROI</RoiLabel>
            <RoiValue>平均</RoiValue>
            <RoiValue>171%</RoiValue>
          </RoiBox>
        </Col>
      </TwoCols>
    </Body>
  </ThumbInner>
);

const SLIDES = [SlideOne, SlideTwo, SlideThree, SlideFour, SlideFive, SlideSix];

/* ---------- editor ---------- */

const MainColumn = styled.main`
  flex: 1;
  min-width: 0;
  display: flex;
  flex-direction: column;
`;

const Canvas = styled.div`
  flex: 1;
  min-height: 0;
  padding-left: 3px;
  display: flex;
  align-items: center;
  justify-content: center;
  background: #2c2c2c;
`;

const Slide = styled.article`
  width: 1559px;
  height: 878px;
  display: flex;
  flex-direction: column;
  background: #fff;
  border: 1px solid #bcbcbc;
`;

const SlideBand = styled.div`
  height: 231px;
  flex: none;
  background: ${NAVY};
`;

const SlideMiddle = styled.div`
  flex: 1;
  padding-top: 89px;
  text-align: center;
`;

const SlideTitle = styled.h1`
  margin: 0;
  font-size: 68.6px;
  line-height: 84px;
  font-weight: 700;
  color: ${NAVY};
`;

const SlideSubtitle = styled.p`
  margin: 46px 0 0;
  font-size: 34.3px;
  line-height: 46px;
  font-weight: 400;
  color: ${CYAN};
`;

const SlideFooter = styled.div`
  height: 231px;
  flex: none;
  padding-top: 86px;
  background: #eeeeee;
  text-align: center;
  font-size: 29px;
  line-height: 40px;
  color: #666;
`;

const NotesBar = styled.footer`
  height: 48px;
  flex: none;
  padding: 0 0 5px 8px;
  display: flex;
  align-items: center;
  background: #2a2a2a;
  border-top: 2px solid #050505;
  border-bottom: 1px solid #555;
  font-size: 14px;
  color: #e4e4e4;
`;

const App: React.FC = () => {
  return (
    <Window>
      <GlobalStyle />
      <ToolRibbon />
      <Workspace>
        <Sidebar>
          {SLIDES.map((Content, i) => (
            <ThumbRow key={i}>
              <ThumbNumber>{i + 1}</ThumbNumber>
              <Thumb $active={i === 0}>
                <Content />
              </Thumb>
            </ThumbRow>
          ))}
        </Sidebar>
        <MainColumn>
          <Canvas>
            <Slide>
              <SlideBand />
              <SlideMiddle>
                <SlideTitle>日本のAI活用状況調査と課題</SlideTitle>
                <SlideSubtitle>生成AIの普及とガバナンスの進化</SlideSubtitle>
              </SlideMiddle>
              <SlideFooter>2026年版</SlideFooter>
            </Slide>
          </Canvas>
          <NotesBar>ノートを入力</NotesBar>
        </MainColumn>
      </Workspace>
    </Window>
  );
};

export default App;
